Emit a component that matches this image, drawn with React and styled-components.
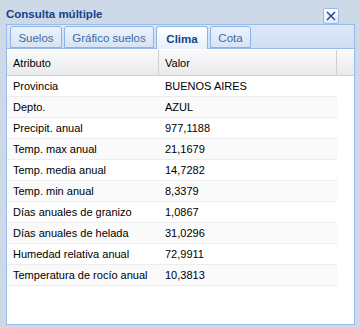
import React from 'react'
import styled, { createGlobalStyle } from 'styled-components'

const Global = createGlobalStyle`
  html, body {
    margin: 0;
    padding: 0;
    background: #ced9e7;
  }
  * { box-sizing: border-box; }
`

const Window = styled.div`
  width: 360px;
  height: 328px;
  background: #ced9e7;
  display: flex;
  flex-direction: column;
  padding: 0 5px 3px 6px;
  font-family: "Liberation Sans", Arial, sans-serif;
`

const Header = styled.div`
  height: 24px;
  display: flex;
  align-items: center;
  justify-content: space-between;
  padding-top: 3px;
`

const Title = styled.span`
  font-weight: bold;
  font-size: 11.5px;
  color: #15428b;
`

const CloseBtn = styled.div`
  width: 16px;
  height: 16px;
  margin-right: 16px;
  margin-top: 4px;
  border: 1px solid #99bbe8;
  border-radius: 2px;
  background: linear-gradient(#ffffff, #dfe9f6);
  display: flex;
  align-items: center;
  justify-content: center;
`

const TabPanel = styled.div`
  flex: 1;
  display: flex;
  flex-direction: column;
`

const TabStrip = styled.div`
  height: 25px;
  border: 1px solid #99bbe8;
  background: linear-gradient(#dde8f7, #cfdef3);
  display: flex;
  align-items: flex-end;
  gap: 2px;
  padding-left: 3px;
`

const Tab = styled.div`
  height: ${p => (p.active ? '23px' : '22px')};
  margin-bottom: ${p => (p.active ? '-1px' : '0')};
  width: ${p => p.w}px;
  border: 1px solid #8db2e3;
  border-bottom: ${p => (p.active ? 'none' : '1px solid #8db2e3')};
  border-radius: 3px 3px 0 0;
  background: ${p => (p.active
    ? 'linear-gradient(#ffffff, #e8f0fb)'
    : 'linear-gradient(#eef3fb, #d5e3f5)')};
  color: ${p => (p.active ? '#15428b' : '#416aa3')};
  font-weight: ${p => (p.active ? 'bold' : 'normal')};
  font-size: 11.5px;
  display: flex;
  align-items: center;
  justify-content: center;
  padding-top: 1px;
`

const Body = styled.div`
  flex: 1;
  border: 1px solid #99bbe8;
  border-top: none;
  background: #ffffff;
  padding-top: 1px;
  display: flex;
  flex-direction: column;
`

const GridHead = styled.div`
  height: 26px;
  display: flex;
  background: linear-gradient(#fafafa, #e9eaec);
  border-bottom: 1px solid #d0d0d0;
  font-size: 11px;
  color: #000;
`

const HeadCell = styled.div`
  width: ${p => p.w}px;
  flex: ${p => (p.w ? 'none' : '1')};
  padding-left: 6px;
  display: flex;
  align-items: center;
  border-right: ${p => (p.w ? '1px solid #d0d0d0' : 'none')};
`

const Row = styled.div`
  width: 330px;
  height: 21px;
  display: flex;
  background: ${p => (p.striped ? '#fafafa' : '#ffffff')};
  border-bottom: 1px solid #ededed;
  font-size: 11px;
  color: #000;
`

const Cell = styled.div`
  width: ${p => p.w}px;
  padding-left: 6px;
  display: flex;
  align-items: center;
  white-space: nowrap;
`

const tabs = [
  { label: 'Suelos', w: 52 },
  { label: 'Gráfico suelos', w: 90 },
  { label: 'Clima', w: 52, active: true },
  { label: 'Cota', w: 41 },
]

const rows = [
  ['Provincia', 'BUENOS AIRES'],
  ['Depto.', 'AZUL'],
  ['Precipit. anual', '977,1188'],
  ['Temp. max anual', '21,1679'],
  ['Temp. media anual', '14,7282'],
  ['Temp. min anual', '8,3379'],
  ['Días anuales de granizo', '1,0867'],
  ['Días anuales de helada', '31,0296'],
  ['Humedad relativa anual', '72,9911'],
  ['Temperatura de rocío anual', '10,3813'],
]

const App = () => (
  <>
    <Global />
    <Window>
      <Header>
        <Title>Consulta múltiple</Title>
        <CloseBtn>
          <svg width="10" height="10" viewBox="0 0 10 10">
            <path d="M1 1 L9 9 M9 1 L1 9" stroke="#15428b" strokeWidth="1.4" />
          </svg>
        </CloseBtn>
      </Header>
      <TabPanel>
        <TabStrip>
          {tabs.map(t => (
            <Tab key={t.label} w={t.w} active={t.active}>{t.label}</Tab>
          ))}
        </TabStrip>
        <Body>
          <GridHead>
            <HeadCell w={152}>Atributo</HeadCell>
            <HeadCell w={178}>Valor</HeadCell>
            <HeadCell />
          </GridHead>
          {rows.map(([k, v], i) => (
            <Row key={k} striped={i % 2 === 1}>
              <Cell w={152}>{k}</Cell>
              <Cell w={178}>{v}</Cell>
            </Row>
          ))}
        </Body>
      </TabPanel>
    </Window>
  </>
)

export default App
